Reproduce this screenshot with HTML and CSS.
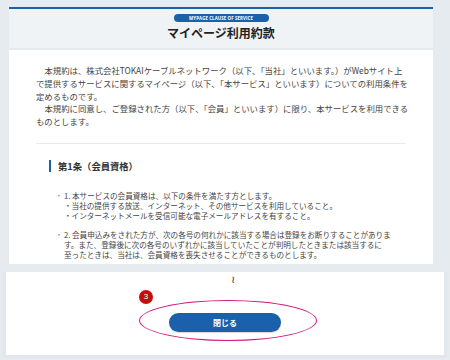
FILE: index.html
```html
<!DOCTYPE html>
<html lang="ja">
<head>
<meta charset="UTF-8">
<meta name="viewport" content="width=device-width, initial-scale=1.0">
<title>マイページ利用約款</title>
<link rel="stylesheet" href="styles.css">
</head>
<body>
  <div class="page">
    <div class="card">
      <div class="card-head">
        <span class="badge">MYPAGE CLAUSE OF SERVICE</span>
        <h1>マイページ利用約款</h1>
      </div>

      <div class="card-body">
        <p class="lead">本規約は、株式会社TOKAIケーブルネットワーク（以下、「当社」といいます。）がWebサイト上で提供するサービスに関するマイページ（以下、「本サービス」といいます）についての利用条件を定めるものです。</p>
        <p class="lead">本規約に同意し、ご登録された方（以下、「会員」といいます）に限り、本サービスを利用できるものとします。</p>

        <hr class="sep">

        <h2 class="article">第1条（会員資格）</h2>
        <ul class="clauses">
          <li>1. 本サービスの会員資格は、以下の条件を満たす方とします。<br>・当社の提供する放送、インターネット、その他サービスを利用していること。<br>・インターネットメールを受信可能な電子メールアドレスを有すること。</li>
          <li>2. 会員申込みをされた方が、次の各号の何れかに該当する場合は登録をお断りすることがあります。また、登録後に次の各号のいずれかに該当していたことが判明したときまたは該当するに<br>至ったときは、当社は、会員資格を喪失させることができるものとします。</li>
        </ul>
      </div>
    </div>
  </div>

  <div class="panel">
    <div class="wave">≀</div>
    <div class="actions">
      <button class="btn-close">閉じる</button>
    </div>
    <!-- annotation marks -->
    <span class="mark-num">3</span>
    <span class="mark-ring"></span>
  </div>
</body>
</html>
```

FILE: styles.css
```css
:root {
  --bg: #e6ebf0;
  --head: #f0f3f5;
  --blue: #1b60ab;
  --text: #333;
  --pink: #d5157c;
}

* {
  margin: 0;
  padding: 0;
  box-sizing: border-box;
}

body {
  width: 450px;
  height: 360px;
  overflow: hidden;
  background: var(--bg);
  font-family: "Noto Sans CJK JP", "Noto Sans", sans-serif;
  color: var(--text);
}

.page {
  padding: 7px 17px 0 9px;
}

.card {
  height: 257px;
  overflow: hidden;
  background: #fff;
  border-top: 2px solid var(--blue);
}

.card-head {
  height: 41px;
  background: var(--head);
  border-bottom: 2px solid #e4e9ee;
  display: flex;
  flex-direction: column;
  align-items: center;
  padding-top: 5px;
}

.badge {
  display: block;
  width: 95px;
  height: 8px;
  border-radius: 4px;
  background: var(--blue);
  color: #fff;
  font-family: "Open Sans", sans-serif;
  font-size: 4.4px;
  font-weight: 700;
  line-height: 8px;
  text-align: center;
  letter-spacing: 0.1px;
}

.card-head h1 {
  margin-top: 3px;
  font-size: 12px;
  font-weight: 700;
  line-height: 16px;
  color: #222;
}

.card-body {
  padding: 14px 24px 0 27px;
}

.lead {
  font-size: 8.4px;
  line-height: 12.8px;
  text-indent: 1em;
  color: #444;
}

.sep {
  border: 0;
  border-top: 1px solid #e6ebf0;
  margin: 15px 3px 0 0;
}

.article {
  margin: 16px 0 0 13px;
  padding-left: 7px;
  border-left: 2px solid var(--blue);
  font-size: 9.3px;
  font-weight: 700;
  line-height: 12px;
  color: #333;
}

.clauses {
  list-style: none;
  margin-top: 19px;
  padding: 0 12px 0 28px;
}

.clauses li {
  position: relative;
  font-size: 7.6px;
  line-height: 10px;
  color: #444;
  margin-bottom: 9px;
}

.clauses li::before {
  content: "・";
  position: absolute;
  left: -9px;
  color: #5b9bd5;
}

.panel {
  position: relative;
  height: 86px;
  margin: 8px 3px 0 3px;
  background: #fff;
  border: 3px solid #e1e7ed;
  border-top: 0;
}

.wave {
  padding: 2px 0 0 16px;
  text-align: center;
  font-family: "DejaVu Sans", sans-serif;
  font-size: 10px;
  line-height: 12px;
  color: #222;
}

.actions {
  display: flex;
  justify-content: center;
  margin-top: 27px;
}

.btn-close {
  width: 112px;
  height: 19px;
  border: 0;
  border-radius: 10px;
  background: var(--blue);
  color: #fff;
  font-family: "Noto Sans CJK JP", sans-serif;
  font-size: 8px;
  font-weight: 700;
  box-shadow: 0 1px 1px rgba(0, 0, 0, 0.15);
}

.mark-num {
  position: absolute;
  left: 133px;
  top: 18px;
  width: 14px;
  height: 14px;
  border-radius: 50%;
  background: #c40d0d;
  color: #fff;
  font-family: "Liberation Sans", sans-serif;
  font-size: 8px;
  line-height: 14px;
  text-align: center;
}

.mark-ring {
  position: absolute;
  left: 133px;
  top: 28px;
  width: 178px;
  height: 41px;
  border: 1.5px solid var(--pink);
  border-radius: 50%;
}
```
